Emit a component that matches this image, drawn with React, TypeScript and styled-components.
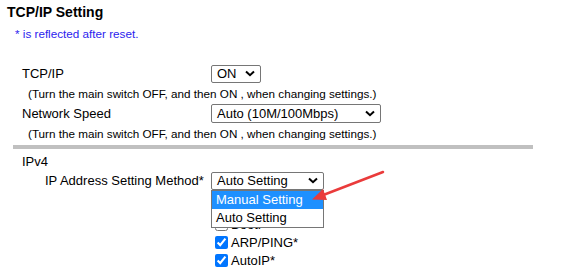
import React from "react";
import styled, { createGlobalStyle } from "styled-components";

const GlobalStyle = createGlobalStyle`
    html, body {
        margin: 0;
        padding: 0;
        background: #ffffff;
    }
    body {
        font-family: "Liberation Sans", Arial, sans-serif;
        color: #000000;
    }
`;

const Page = styled.div`
    position: relative;
    width: 585px;
    height: 274px;
    overflow: hidden;
    padding: 4px 0 0 7px;
    box-sizing: border-box;
`;

const Title = styled.h3`
    margin: 0;
    font-size: 14px;
    font-weight: bold;
    line-height: 16px;
`;

const Notice = styled.div`
    margin: 7px 0 0 8px;
    font-size: 11.7px;
    line-height: 14px;
    color: #2b22ee;
`;

const Section = styled.div<{ $top?: number }>`
    margin-top: ${p => (p.$top === undefined ? 22 : p.$top)}px;
    padding-left: 15px;
`;

const Row = styled.div<{ $indent?: number }>`
    display: grid;
    grid-template-columns: ${p => 189 - (p.$indent || 0)}px auto;
    align-items: center;
    height: 21px;
    padding-left: ${p => p.$indent || 0}px;
    font-size: 13px;
`;

const Hint = styled.div`
    padding-left: 6px;
    font-size: 11.7px;
    line-height: 19px;
    height: 19px;
`;

const Separator = styled.div`
    margin: 2px 0 0 6px;
    width: 520px;
    height: 4px;
    background: #c0c0c0;
`;

const GroupTitle = styled.div`
    margin-top: 5px;
    padding-left: 15px;
    font-size: 13px;
    line-height: 16px;
`;

const SelectWrap = styled.div`
    position: relative;
    justify-self: start;
`;

const SelectBox = styled.div<{ $w: number; $h?: number }>`
    box-sizing: border-box;
    width: ${p => p.$w}px;
    height: ${p => p.$h || 18}px;
    border: 1px solid #767676;
    border-radius: 2px;
    display: flex;
    align-items: center;
    justify-content: space-between;
    padding: 0 5px 0 5px;
    font-size: 13px;
    background: #ffffff;
`;

const Chevron = () => (
    <svg width="10" height="7" viewBox="0 0 10 7">
        <path d="M1 1.5 L5 5.2 L9 1.5" fill="none" stroke="#000" strokeWidth="2" />
    </svg>
);

const Popup = styled.div`
    position: absolute;
    left: 0;
    top: 18px;
    width: 113px;
    box-sizing: border-box;
    border: 1px solid #767676;
    background: #ffffff;
    z-index: 2;
`;

const Option = styled.div<{ $active?: boolean }>`
    height: 18px;
    line-height: 18px;
    padding-left: 4px;
    font-size: 13px;
    background: ${p => (p.$active ? "#1e90ff" : "#ffffff")};
    color: ${p => (p.$active ? "#ffffff" : "#000000")};
`;

const Checks = styled.div`
    margin: 27px 0 0 208px;
    display: flex;
    flex-direction: column;
    gap: 5px;
`;

const CheckItem = styled.label`
    display: flex;
    align-items: center;
    gap: 3px;
    height: 13px;
    font-size: 13px;
    input {
        margin: 0;
        width: 13px;
        height: 13px;
        accent-color: #0075ff;
    }
`;

const Arrow = styled.svg`
    position: absolute;
    left: 0;
    top: 0;
    pointer-events: none;
    z-index: 3;
`;

export default function App() {
    return (
        <Page>
            <GlobalStyle />
            <Title>TCP/IP Setting</Title>
            <Notice>* is reflected after reset.</Notice>
            <Section>
                <Row>
                    <span>TCP/IP</span>
                    <SelectBox $w={50}>
                        <span>ON</span>
                        <Chevron />
                    </SelectBox>
                </Row>
                <Hint>(Turn the main switch OFF, and then ON , when changing settings.)</Hint>
                <Row>
                    <span>Network Speed</span>
                    <SelectBox $w={170} $h={19}>
                        <span>Auto (10M/100Mbps)</span>
                        <Chevron />
                    </SelectBox>
                </Row>
                <Hint>(Turn the main switch OFF, and then ON , when changing settings.)</Hint>
            </Section>
            <Separator />
            <GroupTitle>IPv4</GroupTitle>
            <Section $top={0}>
                <Row $indent={23}>
                    <span>IP Address Setting Method*</span>
                    <SelectWrap>
                        <SelectBox $w={113}>
                            <span>Auto Setting</span>
                            <Chevron />
                        </SelectBox>
                        <Popup>
                            <Option $active>Manual Setting</Option>
                            <Option>Auto Setting</Option>
                        </Popup>
                    </SelectWrap>
                </Row>
            </Section>
            <Checks>
                <CheckItem><input type="checkbox" readOnly />BootP</CheckItem>
                <CheckItem><input type="checkbox" readOnly checked />ARP/PING*</CheckItem>
                <CheckItem><input type="checkbox" readOnly checked />AutoIP*</CheckItem>
            </Checks>
            <Arrow width="585" height="274" viewBox="0 0 585 274">
                <line x1="383" y1="172" x2="322" y2="195.5" stroke="#ea3b3b" strokeWidth="2.5" strokeLinecap="round" />
                <polygon points="312,199.5 323,189 327,200" fill="#ea3b3b" />
            </Arrow>
        </Page>
    );
}
